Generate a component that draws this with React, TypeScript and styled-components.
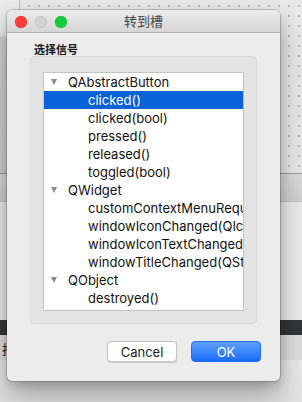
import React, { useState } from 'react';
import styled, { createGlobalStyle } from 'styled-components';

const GlobalStyle = createGlobalStyle`
  html, body {
    margin: 0;
    padding: 0;
    width: 302px;
    height: 402px;
    overflow: hidden;
    background: #e6e6e6;
  }
  * {
    box-sizing: border-box;
  }
`;

const Screen = styled.div`
  position: relative;
  width: 302px;
  height: 402px;
  overflow: hidden;
  display: flex;
  flex-direction: column;
  font-family: Inter, 'Liberation Sans', 'Noto Sans CJK SC', sans-serif;
`;

/* backdrop: the Qt Creator form editor behind the dialog */
const CanvasBand = styled.div`
  height: 174px;
  display: flex;
  border-bottom: 1px solid #9c9c9c;
`;

const SidePanel = styled.div`
  width: 20px;
  background: linear-gradient(180deg, #ececec 0px, #ececec 36px, #d4d4d4 37px, #cfcfcf 100%);
  border-right: 1px solid #bdbdbd;
`;

const DotCanvas = styled.div`
  flex: 1;
  background-color: #e9e9e9;
  background-image: radial-gradient(circle, #9d9d9d 0.6px, transparent 0.9px);
  background-size: 10px 10px;
  background-position: 4px 1px;
`;

const ToolBand = styled.div`
  height: 28px;
  background: linear-gradient(180deg, #dcdcdc, #d0d0d0);
  border-bottom: 1px solid #c4c4c4;
`;

const PaneBand = styled.div`
  height: 118px;
  background: #ececec;
`;

const DarkBand = styled.div`
  height: 15px;
  background: #333537;
`;

const TabBand = styled.div`
  height: 25px;
  background: #dfdfdf;
  color: #222;
  font-size: 13px;
  padding: 4px 0 0 2px;
  font-family: 'Noto Sans CJK SC', sans-serif;
`;

const FootBand = styled.div`
  flex: 1;
  background: linear-gradient(180deg, #ececec, #e2e2e2);
`;

/* the dialog window */
const Dialog = styled.div`
  position: absolute;
  left: 7px;
  top: 10px;
  width: 273px;
  height: 371px;
  display: flex;
  flex-direction: column;
  background: #ececec;
  border-radius: 5px;
  box-shadow: 0 0 0 0.5px rgba(0, 0, 0, 0.35), 0 14px 28px rgba(0, 0, 0, 0.32), 0 4px 10px rgba(0, 0, 0, 0.12);
  overflow: hidden;
`;

const TitleBar = styled.div`
  position: relative;
  height: 23px;
  flex: none;
  display: flex;
  align-items: center;
  justify-content: center;
  background: linear-gradient(180deg, #ebebeb, #d6d6d6);
  border-bottom: 1px solid #b4b4b4;
`;

const Lights = styled.div`
  position: absolute;
  left: 8px;
  top: 6px;
  display: flex;
  gap: 8px;
`;

const Light = styled.span<{ $color: string; $border: string }>`
  width: 12px;
  height: 12px;
  border-radius: 50%;
  background: ${(p) => p.$color};
  box-shadow: inset 0 0 0 0.5px ${(p) => p.$border};
`;

const Title = styled.div`
  font-family: 'Noto Sans CJK SC', sans-serif;
  font-size: 13px;
  color: #4a4a4a;
  line-height: 16px;
`;

const Body = styled.div`
  flex: 1;
  display: flex;
  flex-direction: column;
  padding: 9px 23px 19px 23px;
`;

const GroupLabel = styled.div`
  font-family: 'Noto Sans CJK SC', sans-serif;
  font-size: 11px;
  font-weight: 600;
  color: #1a1a1a;
  line-height: 14px;
  padding-left: 4px;
`;

const GroupBox = styled.div`
  height: 268px;
  background: #e3e3e3;
  border: 1px solid #dadada;
  border-radius: 4px;
  padding: 15px 12px 12px 12px;
  display: flex;
`;

const List = styled.div`
  flex: 1;
  background: #ffffff;
  border: 1px solid #c3c3c3;
  overflow: hidden;
  display: flex;
  flex-direction: column;
`;

const Row = styled.div<{ $level: number; $selected?: boolean }>`
  height: 18px;
  flex: none;
  display: flex;
  align-items: center;
  padding-left: ${(p) => (p.$level === 0 ? 6 : 44)}px;
  background: ${(p) => (p.$selected ? '#0a62d9' : 'transparent')};
  color: ${(p) => (p.$selected ? '#ffffff' : '#111111')};
  font-size: 13px;
  white-space: nowrap;
  cursor: default;
`;

const Arrow = styled.span`
  width: 0;
  height: 0;
  margin-left: 1px;
  margin-right: 11px;
  border-left: 3.5px solid transparent;
  border-right: 3.5px solid transparent;
  border-top: 6px solid #8a8a8a;
`;

const ButtonRow = styled.div`
  display: flex;
  justify-content: flex-end;
  gap: 14px;
  margin-top: 17px;
  margin-right: -4px;
`;

const Button = styled.button<{ $primary?: boolean }>`
  width: 70px;
  height: 21px;
  border-radius: 4px;
  font-family: inherit;
  font-size: 13px;
  padding: 0;
  cursor: pointer;
  color: ${(p) => (p.$primary ? '#ffffff' : '#1e1e1e')};
  border: ${(p) => (p.$primary ? '1px solid #1f6ef0' : '1px solid #c4c4c4')};
  background: ${(p) => (p.$primary ? 'linear-gradient(180deg, #5ea1fb, #1b6cf6)' : '#ffffff')};
  box-shadow: ${(p) => (p.$primary ? 'none' : '0 0.5px 1px rgba(0,0,0,0.15)')};
`;

const signals = [
  { name: 'QAbstractButton', items: ['clicked()', 'clicked(bool)', 'pressed()', 'released()', 'toggled(bool)'] },
  {
    name: 'QWidget',
    items: [
      'customContextMenuRequested(QPoint)',
      'windowIconChanged(QIcon)',
      'windowIconTextChanged(QString)',
      'windowTitleChanged(QString)',
    ],
  },
  { name: 'QObject', items: ['destroyed()', 'destroyed(QObject*)', 'objectNameChanged(QString)'] },
];

export default function App() {
  const [selected, setSelected] = useState('QAbstractButton/clicked()');

  return (
    <>
      <GlobalStyle />
      <Screen>
        <CanvasBand>
          <SidePanel />
          <DotCanvas />
        </CanvasBand>
        <ToolBand />
        <PaneBand />
        <DarkBand />
        <TabBand>拍</TabBand>
        <FootBand />

        <Dialog>
          <TitleBar>
            <Lights>
              <Light $color="#fc3d39" $border="#e0302c" />
              <Light $color="#d3d3d3" $border="#bdbdbd" />
              <Light $color="#19cd3c" $border="#12b52f" />
            </Lights>
            <Title>转到槽</Title>
          </TitleBar>
          <Body>
            <GroupLabel>选择信号</GroupLabel>
            <GroupBox>
              <List>
                {signals.map((group) => (
                  <React.Fragment key={group.name}>
                    <Row $level={0}>
                      <Arrow />
                      {group.name}
                    </Row>
                    {group.items.map((item) => {
                      const key = `${group.name}/${item}`;
                      return (
                        <Row key={key} $level={1} $selected={selected === key} onClick={() => setSelected(key)}>
                          {item}
                        </Row>
                      );
                    })}
                  </React.Fragment>
                ))}
              </List>
            </GroupBox>
            <ButtonRow>
              <Button>Cancel</Button>
              <Button $primary>OK</Button>
            </ButtonRow>
          </Body>
        </Dialog>
      </Screen>
    </>
  );
}
